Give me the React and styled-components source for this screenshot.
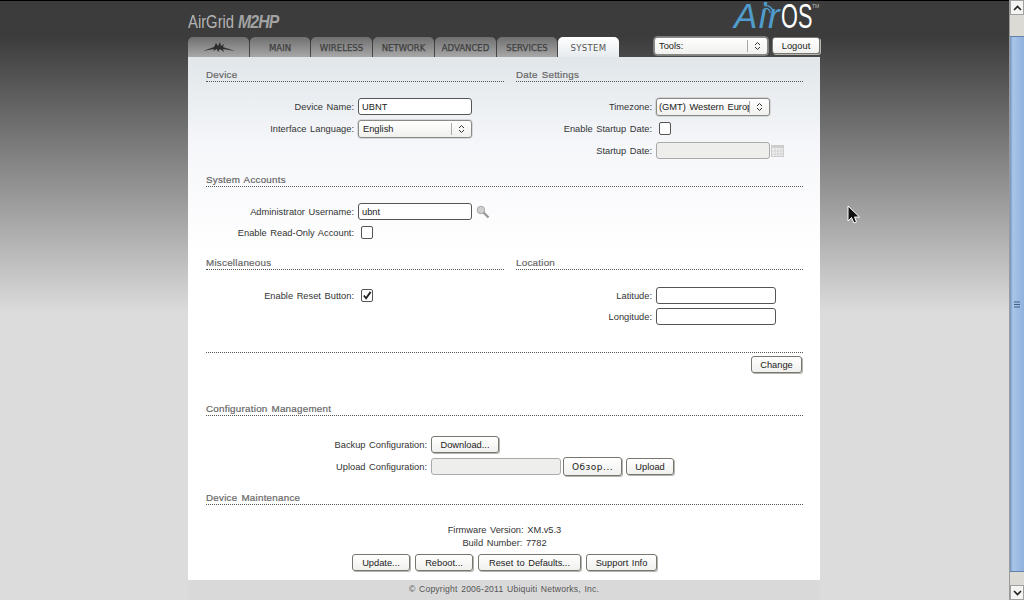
import styled, { createGlobalStyle } from "styled-components";

const GlobalStyle = createGlobalStyle`
  html, body {
    margin: 0;
    padding: 0;
    height: 600px;
    overflow: hidden;
  }
  body {
    font-family: "Liberation Sans", Arial, sans-serif;
    font-size: 9.3px;
    word-spacing: 1px;
    color: #333;
  }
`;

const Screen = styled.div`
  position: relative;
  display: flex;
  width: 1024px;
  height: 600px;
  overflow: hidden;
`;

const Page = styled.div`
  flex: 1;
  display: flex;
  justify-content: center;
  padding-right: 1px;
  border-top: 1px solid #000;
  background: linear-gradient(#3c3c3c 0, #3c3c3c 36px, #dcdcdc 312px, #dcdcdc 100%);
`;

const Wrapper = styled.div`
  width: 632px;
  height: 599px;
  display: flex;
  flex-direction: column;
`;

const Header = styled.div`
  flex: 0 0 36px;
  display: flex;
  justify-content: space-between;
`;

const ProductName = styled.div`
  display: flex;
  margin-top: 11px;
  font-size: 19px;
  line-height: 20px;
  word-spacing: 0;
  color: #b4b4b4;
`;

const ProductText = styled.span`
  display: block;
  width: 50px;
  transform: scaleX(0.78);
  transform-origin: left;
  white-space: nowrap;
`;

const ProductModel = styled.span`
  display: block;
  white-space: nowrap;
  font-weight: bold;
  font-style: italic;
  font-size: 18px;
  letter-spacing: -1px;
  color: #a2a2a2;
  transform: scaleX(0.88);
  transform-origin: left;
`;

const AirOs = styled.div`
  position: relative;
  display: flex;
  height: 36px;
  margin-right: 1px;
  font-size: 35px;
  line-height: 30px;
  word-spacing: 0;
  color: #fff;
`;

const AirPart = styled.span`
  display: block;
  width: 47px;
  font-style: italic;
  letter-spacing: 1.5px;
  color: #4f9ccd;
`;

const OsPart = styled.span`
  display: block;
  width: 31px;
  transform: scaleX(0.62);
  transform-origin: left;
`;

const Waves = styled.svg`
  position: absolute;
  left: 29px;
  top: 1px;
`;

const Tm = styled.span`
  display: block;
  width: 7px;
  font-size: 5px;
  line-height: 11px;
  color: #bbb;
`;

const NavBar = styled.div`
  flex: 0 0 20px;
  display: flex;
  align-items: flex-start;
  justify-content: space-between;
`;

const Tabs = styled.div`
  display: flex;
  gap: 1px;
`;

const Tab = styled.div`
  width: ${(p) => p.$w || 61}px;
  height: 20px;
  display: flex;
  align-items: center;
  justify-content: center;
  border-radius: 5px 5px 0 0;
  font-family: "DejaVu Sans Condensed", "DejaVu Sans", sans-serif;
  font-stretch: condensed;
  font-size: 9.5px;
  word-spacing: 0;
  letter-spacing: ${(p) => (p.$active ? "0.3px" : "0")};
  -webkit-text-stroke: ${(p) => (p.$active ? "0" : "0.25px #3f3f3f")};
  background: ${(p) => (p.$active ? "linear-gradient(#fff, #e6ebef)" : "linear-gradient(#6f6f6f, #a8a8a8)")};
  color: ${(p) => (p.$active ? "#555" : "#3f3f3f")};
`;

const Tools = styled.div`
  display: flex;
  gap: 4px;
`;

const Panel = styled.div`
  flex: 1;
  min-height: 0;
  display: flex;
  flex-direction: column;
  padding: 0 17px 0 18px;
  background: linear-gradient(#e0e6ea 0, #f6f7fa 90px, #fff 200px);
`;

const Columns = styled.div`
  display: grid;
  grid-template-columns: 298px 287px;
  gap: 12px;
`;

const SectionHead = styled.div`
  height: 13px;
  flex-shrink: 0;
  line-height: 14px;
  margin-top: ${(p) => p.$top}px;
  margin-bottom: ${(p) => p.$bottom}px;
  border-bottom: 1px dotted #555;
  font-size: 9.8px;
  letter-spacing: 0.25px;
  -webkit-text-stroke: 0.2px #666;
  color: #666;
`;

const Row = styled.div`
  height: ${(p) => p.$h || 21}px;
  box-sizing: border-box;
  padding-top: ${(p) => (p.$h === 22 ? 1 : 0)}px;
  flex-shrink: 0;
  display: flex;
  align-items: center;
`;

const Label = styled.div`
  width: ${(p) => p.$w || 152}px;
  padding-right: 4px;
  box-sizing: border-box;
  text-align: right;
  white-space: nowrap;
`;

const Field = styled.div`
  width: ${(p) => p.$w || 114}px;
  height: 17px;
  box-sizing: border-box;
  padding-left: 3px;
  display: flex;
  align-items: center;
  overflow: hidden;
  white-space: nowrap;
  border: 1px solid ${(p) => (p.$disabled ? "#aaa" : "#555")};
  border-radius: 3px;
  background: ${(p) => (p.$disabled ? "#eeeeec" : "#fff")};
  color: #222;
`;

const Select = styled.div`
  width: ${(p) => p.$w || 114}px;
  height: 18px;
  box-sizing: border-box;
  display: flex;
  align-items: center;
  justify-content: space-between;
  padding-left: ${(p) => p.$pad || 4}px;
  border: 1px solid #8a8a84;
  border-radius: 3px;
  background: linear-gradient(#fff, #f0f0ee);
  box-shadow: 0 0 0 0.5px #bbb;
  color: #222;
  white-space: nowrap;
  overflow: hidden;
`;

const SelectText = styled.span`
  flex: 1;
  overflow: hidden;
`;

const SelectArrows = styled.span`
  flex: 0 0 19px;
  height: 12px;
  display: flex;
  align-items: center;
  justify-content: center;
  border-left: 1px solid #aaa;
`;

const Check = styled.div`
  width: 12px;
  height: 13px;
  box-sizing: border-box;
  margin-left: 3px;
  border: 1px solid #555;
  border-radius: 2px;
  background: #fff;
  display: flex;
  align-items: center;
  justify-content: center;
`;

const Button = styled.div`
  height: ${(p) => p.$h || 17}px;
  width: ${(p) => p.$w}px;
  box-sizing: border-box;
  display: flex;
  align-items: center;
  justify-content: center;
  border: 1px solid #77776f;
  border-radius: 3px;
  background: linear-gradient(#fff, #f0f0ee);
  box-shadow: 1px 1px 0 #b5b5b0;
  color: #222;
  white-space: nowrap;
  font-family: ${(p) => (p.$spaced ? '"DejaVu Sans", sans-serif' : "inherit")};
  font-size: ${(p) => (p.$spaced ? "9px" : "inherit")};
  letter-spacing: ${(p) => (p.$spaced ? "0.5px" : "0")};
  margin-left: ${(p) => p.$left || 0}px;
`;

const Divider = styled.div`
  height: 0;
  margin-top: 25px;
  border-top: 1px dotted #555;
`;

const ChangeRow = styled.div`
  display: flex;
  justify-content: flex-end;
  margin-top: 3px;
  padding-right: 1px;
`;

const UploadRow = styled.div`
  display: flex;
  align-items: center;
  gap: 2px;
`;

const Info = styled.div`
  margin-top: 1px;
  display: flex;
  flex-direction: column;
  align-items: center;
  line-height: 13px;
`;

const InfoLine = styled.div`
  white-space: nowrap;
`;

const Actions = styled.div`
  margin-top: 4px;
  display: flex;
  justify-content: center;
  gap: 5px;
`;

const Footer = styled.div`
  flex: 0 0 20px;
  box-sizing: border-box;
  padding-bottom: 2px;
  display: flex;
  align-items: center;
  justify-content: center;
  background: #d9d9d9;
  font-size: 8.6px;
  letter-spacing: 0.2px;
  color: #555;
`;

const Scrollbar = styled.div`
  flex: 0 0 15px;
  display: flex;
  flex-direction: column;
  background: #dcdad5;
  border-left: 1px solid #9a9a9a;
  box-sizing: border-box;
`;

const ScrollButton = styled.div`
  flex: 0 0 15px;
  display: flex;
  align-items: center;
  justify-content: center;
  background: #f4f4f2;
  border: 1px solid #a0a0a0;
  box-sizing: border-box;
`;

const Trough = styled.div`
  flex: 1;
  display: flex;
  flex-direction: column;
  padding: 21px 0 13px;
`;

const Thumb = styled.div`
  flex: 1;
  display: flex;
  align-items: center;
  justify-content: center;
  background: linear-gradient(90deg, #6f93c0, #a9c5e8 20%, #8fb2de 100%);
  border: 1px solid #5f82ad;
  border-width: 1px 0;
`;

const Cursor = styled.svg`
  position: absolute;
  left: 847px;
  top: 205px;
`;

const LogoMark = () => (
  <svg width="32" height="11" viewBox="0 0 32 11">
    <path d="M0 9 L11 5 L13 1 L15 4 L17 0 L18 4 L21 2 L20 5 L32 9 L20 7 L21 10 L17 7 L15 10 L14 7 L10 9 L11 7 Z" fill="#2e2e2e" />
  </svg>
);

const Arrows = () => (
  <svg width="7" height="10" viewBox="0 0 7 10">
    <path d="M1 4 L3.5 1.5 L6 4 M1 6 L3.5 8.5 L6 6" fill="none" stroke="#333" strokeWidth="1" />
  </svg>
);

const KeyIcon = () => (
  <svg width="14" height="14" viewBox="0 0 14 14" style={{ marginLeft: 4 }}>
    <circle cx="5" cy="5" r="3.8" fill="#cfcfcf" stroke="#aaa" />
    <path d="M7.5 7.5 L12.5 12.5" stroke="#999" strokeWidth="2.4" />
  </svg>
);

const CalendarIcon = () => (
  <svg width="13" height="12" viewBox="0 0 13 12" style={{ marginLeft: 1 }}>
    <rect x="0.5" y="0.5" width="12" height="11" fill="#eee" stroke="#ccc" />
    <rect x="1" y="1" width="11" height="2" fill="#cfcfcf" />
    <path d="M1 6 H12 M1 9 H12 M4 3 V11 M7 3 V11 M10 3 V11" stroke="#d6d6d6" />
  </svg>
);

const CheckMark = () => (
  <svg width="11" height="11" viewBox="0 0 11 11">
    <path d="M2 5.5 L4.5 8.5 L9.5 1.5" fill="none" stroke="#222" strokeWidth="2" />
  </svg>
);

const App = function () {
  return (
    <Screen>
      <GlobalStyle />
      <Page>
        <Wrapper>
          <Header>
            <ProductName>
              <ProductText>AirGrid</ProductText>
              <ProductModel>M2HP</ProductModel>
            </ProductName>
            <AirOs>
              <AirPart>Air</AirPart>
              <OsPart>OS</OsPart>
              <Tm>TM</Tm>
              <Waves width="12" height="12" viewBox="0 0 12 12">
                <path d="M1 4 A7 7 0 0 1 10 10 M1 7 A4 4 0 0 1 7 11" fill="none" stroke="#4f9ccd" strokeWidth="1.3" />
              </Waves>
            </AirOs>
          </Header>
          <NavBar>
            <Tabs>
              <Tab><LogoMark /></Tab>
              <Tab $w={60}>MAIN</Tab>
              <Tab>WIRELESS</Tab>
              <Tab>NETWORK</Tab>
              <Tab>ADVANCED</Tab>
              <Tab $w={60}>SERVICES</Tab>
              <Tab $active>SYSTEM</Tab>
            </Tabs>
            <Tools>
              <Select $w={114} $pad={4}><SelectText>Tools:</SelectText><SelectArrows><Arrows /></SelectArrows></Select>
              <Button $w={48}>Logout</Button>
            </Tools>
          </NavBar>
          <Panel>
            <Columns>
              <div>
                <SectionHead $top={11} $bottom={13}>Device</SectionHead>
                <Row $h={22}><Label>Device Name:</Label><Field>UBNT</Field></Row>
                <Row $h={22}><Label>Interface Language:</Label><Select><SelectText>English</SelectText><SelectArrows><Arrows /></SelectArrows></Select></Row>
              </div>
              <div>
                <SectionHead $top={11} $bottom={13}>Date Settings</SectionHead>
                <Row $h={22}><Label $w={140}>Timezone:</Label><Select $pad={2}><SelectText>(GMT) Western Europ</SelectText><SelectArrows><Arrows /></SelectArrows></Select></Row>
                <Row $h={22}><Label $w={140}>Enable Startup Date:</Label><Check /></Row>
                <Row $h={22}><Label $w={140}>Startup Date:</Label><Field $disabled /><CalendarIcon /></Row>
              </div>
            </Columns>
            <SectionHead $top={12} $bottom={14}>System Accounts</SectionHead>
            <Row><Label>Administrator Username:</Label><Field>ubnt</Field><KeyIcon /></Row>
            <Row><Label>Enable Read-Only Account:</Label><Check /></Row>
            <Columns>
              <div>
                <SectionHead $top={13} $bottom={15}>Miscellaneous</SectionHead>
                <Row><Label>Enable Reset Button:</Label><Check><CheckMark /></Check></Row>
              </div>
              <div>
                <SectionHead $top={13} $bottom={15}>Location</SectionHead>
                <Row><Label $w={140}>Latitude:</Label><Field $w={120} /></Row>
                <Row><Label $w={140}>Longitude:</Label><Field $w={120} /></Row>
              </div>
            </Columns>
            <Divider />
            <ChangeRow><Button $w={51}>Change</Button></ChangeRow>
            <SectionHead $top={29} $bottom={17}>Configuration Management</SectionHead>
            <Row $h={22}><Label $w={225}>Backup Configuration:</Label><Button $w={68}>Download...</Button></Row>
            <Row $h={22}>
              <Label $w={225}>Upload Configuration:</Label>
              <UploadRow>
                <Field $disabled $w={130} />
                <Button $w={59} $h={19} $spaced>Обзор...</Button>
                <Button $w={48} $left={2}>Upload</Button>
              </UploadRow>
            </Row>
            <SectionHead $top={14} $bottom={18}>Device Maintenance</SectionHead>
            <Info>
              <InfoLine>Firmware Version: XM.v5.3</InfoLine>
              <InfoLine>Build Number: 7782</InfoLine>
            </Info>
            <Actions>
              <Button $w={58}>Update...</Button>
              <Button $w={58}>Reboot...</Button>
              <Button $w={103}>Reset to Defaults...</Button>
              <Button $w={71}>Support Info</Button>
            </Actions>
          </Panel>
          <Footer>© Copyright 2006-2011 Ubiquiti Networks, Inc.</Footer>
        </Wrapper>
      </Page>
      <Scrollbar>
        <ScrollButton>
          <svg width="9" height="6" viewBox="0 0 9 6"><path d="M1 5 L4.5 1.5 L8 5" fill="none" stroke="#222" strokeWidth="1.6" /></svg>
        </ScrollButton>
        <Trough>
          <Thumb>
            <svg width="7" height="7" viewBox="0 0 7 7"><path d="M0 1 H6 M0 3.5 H6 M0 6 H6" stroke="#3f618c" /></svg>
          </Thumb>
        </Trough>
        <ScrollButton>
          <svg width="9" height="6" viewBox="0 0 9 6"><path d="M1 1 L4.5 4.5 L8 1" fill="none" stroke="#222" strokeWidth="1.6" /></svg>
        </ScrollButton>
      </Scrollbar>
      <Cursor width="14" height="20" viewBox="0 0 14 20">
        <path d="M1 1 L1 16 L4.5 12.5 L7 18 L9.5 17 L7.5 12 L12.5 12 Z" fill="#111" stroke="#fff" strokeWidth="1" />
      </Cursor>
    </Screen>
  );
};

export default App;
